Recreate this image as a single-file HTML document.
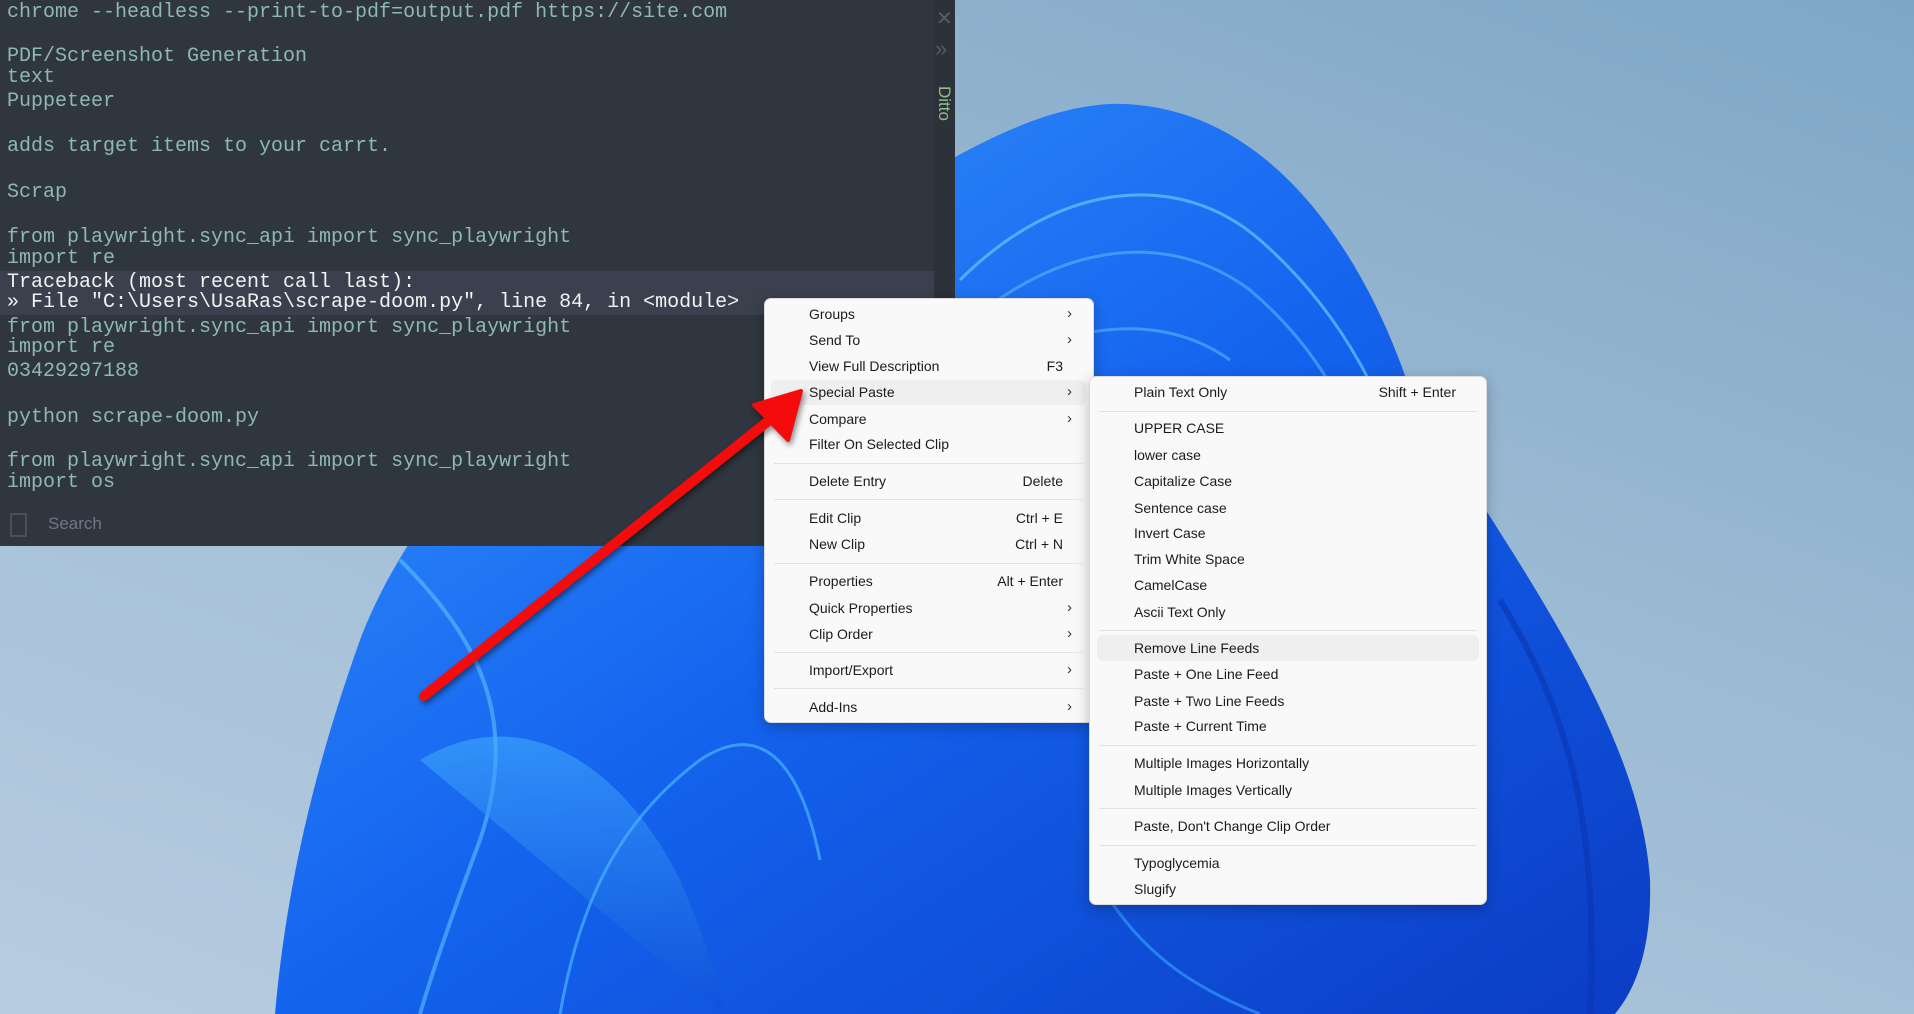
<!DOCTYPE html>
<html><head><meta charset="utf-8"><style>
*{margin:0;padding:0;box-sizing:border-box}
body{width:1914px;height:1014px;overflow:hidden;position:relative;background:linear-gradient(200deg,#7ea6c6 0%,#9dbbd4 45%,#b7cce0 100%);font-family:"Liberation Sans",sans-serif}
#term{position:absolute;left:0;top:0;width:955px;height:546px;background:#30363f}
#strip{position:absolute;left:934px;top:0;width:21px;height:546px;background:#2c313a}
.l{position:absolute;left:7px;font-family:"Liberation Mono",monospace;font-size:20px;line-height:21px;color:#8db8b6;white-space:pre}
.w{color:#f2f2f2}
#hl{position:absolute;left:0;top:271px;width:934px;height:44px;background:#3a404d}
.menu{position:absolute;background:#f9f9f9;border:1px solid #dcdcdc;border-radius:7px;box-shadow:0 4px 14px rgba(0,0,0,.25)}
.it{position:absolute;font-size:14px;color:#1b1b1b;line-height:26px;height:26px;white-space:nowrap}
.sc{position:absolute;font-size:14px;color:#1b1b1b;line-height:26px;height:26px;text-align:right;white-space:nowrap}
.ar{position:absolute;font-size:15px;color:#333;line-height:26px;height:26px}
.sep{position:absolute;height:1px;background:#e3e3e3}
.hi{position:absolute;background:#efefef;border-radius:5px}
</style></head><body>
<svg style="position:absolute;left:0;top:0" width="1914" height="1014">
<defs>
<linearGradient id="g1" x1="0" y1="0" x2="1" y2="1"><stop offset="0" stop-color="#3a9cff"/><stop offset=".5" stop-color="#1463ee"/><stop offset="1" stop-color="#0b3cc4"/></linearGradient>
<linearGradient id="g2" x1="0" y1="0" x2="0" y2="1"><stop offset="0" stop-color="#46b0ff"/><stop offset="1" stop-color="#0d4fd8"/></linearGradient>
</defs>
<path d="M275 1014 C285 900 310 780 360 640 C420 480 600 300 800 240 C900 200 1000 110 1110 104 C1260 100 1360 240 1410 390 C1500 540 1640 720 1650 880 C1652 950 1635 990 1615 1014 Z" fill="url(#g1)"/>
<path d="M960 280 C1060 180 1180 170 1260 240 C1340 310 1390 400 1420 520" fill="none" stroke="#6cc4ff" stroke-width="3" opacity=".7"/>
<path d="M960 330 C1060 240 1170 230 1250 290 C1320 350 1360 420 1390 540" fill="none" stroke="#5ab6ff" stroke-width="3" opacity=".6"/>
<path d="M960 390 C1060 320 1160 310 1230 360" fill="none" stroke="#5ab6ff" stroke-width="3" opacity=".6"/>
<path d="M400 560 C480 640 520 720 480 840 C450 920 430 980 420 1014" fill="none" stroke="#5fc0ff" stroke-width="4" opacity=".6"/>
<path d="M420 760 C520 700 620 760 680 880 C710 950 720 990 725 1014" fill="url(#g2)" opacity=".55"/>
<path d="M560 1014 C580 900 620 820 700 760 C760 720 800 760 820 860" fill="none" stroke="#49b4ff" stroke-width="3" opacity=".7"/>
<path d="M1500 600 C1560 700 1600 800 1590 1014" fill="none" stroke="#0a35b0" stroke-width="6" opacity=".6"/>
<path d="M1110 900 C1150 960 1200 990 1260 1014" fill="none" stroke="#39a4ff" stroke-width="3" opacity=".6"/>
</svg>
<div id="term">
<div id="hl"></div>
<div id="strip"></div>
<div class="l" style="top:2px">chrome --headless --print-to-pdf=output.pdf https://site.com</div>
<div class="l" style="top:46px">PDF/Screenshot Generation</div>
<div class="l" style="top:67px">text</div>
<div class="l" style="top:91px">Puppeteer</div>
<div class="l" style="top:136px">adds target items to your carrt.</div>
<div class="l" style="top:182px">Scrap</div>
<div class="l" style="top:227px">from playwright.sync_api import sync_playwright</div>
<div class="l" style="top:248px">import re</div>
<div class="l w" style="top:272px">Traceback (most recent call last):</div>
<div class="l w" style="top:292px">» File "C:\Users\UsaRas\scrape-doom.py", line 84, in &lt;module&gt;</div>
<div class="l" style="top:317px">from playwright.sync_api import sync_playwright</div>
<div class="l" style="top:337px">import re</div>
<div class="l" style="top:361px">03429297188</div>
<div class="l" style="top:407px">python scrape-doom.py</div>
<div class="l" style="top:451px">from playwright.sync_api import sync_playwright</div>
<div class="l" style="top:472px">import os</div>
<div style="position:absolute;left:10px;top:513px;width:17px;height:24px;border:2px solid #4a505a"></div>
<div style="position:absolute;left:48px;top:514px;font-size:17px;color:#707783">Search</div>
<div style="position:absolute;left:936px;top:6px;font-size:20px;color:#555c66">✕</div>
<div style="position:absolute;left:935px;top:36px;font-size:22px;color:#555c66">»</div>
<div style="position:absolute;left:934px;top:86px;font-size:17px;color:#8fbf8a;writing-mode:vertical-rl">Ditto</div>
</div>

<div class="menu" style="left:764px;top:298px;width:330px;height:425px"></div>
<div class="hi" style="left:771px;top:380px;width:315px;height:25px"></div>
<div class="menu" style="left:1089px;top:376px;width:398px;height:529px"></div>
<div class="hi" style="left:1097px;top:635px;width:382px;height:26px"></div>

<div id="m1">
<div class="it" style="left:809px;top:301px">Groups</div><div class="ar" style="left:1067px;top:301px">›</div>
<div class="it" style="left:809px;top:327px">Send To</div><div class="ar" style="left:1067px;top:327px">›</div>
<div class="it" style="left:809px;top:353px">View Full Description</div><div class="sc" style="left:1000px;width:63px;top:353px">F3</div>
<div class="it" style="left:809px;top:379px">Special Paste</div><div class="ar" style="left:1067px;top:379px">›</div>
<div class="it" style="left:809px;top:406px">Compare</div><div class="ar" style="left:1067px;top:406px">›</div>
<div class="it" style="left:809px;top:431px">Filter On Selected Clip</div>
<div class="sep" style="left:774px;width:310px;top:463px"></div>
<div class="it" style="left:809px;top:468px">Delete Entry</div><div class="sc" style="left:950px;width:113px;top:468px">Delete</div>
<div class="sep" style="left:774px;width:310px;top:499px"></div>
<div class="it" style="left:809px;top:505px">Edit Clip</div><div class="sc" style="left:950px;width:113px;top:505px">Ctrl + E</div>
<div class="it" style="left:809px;top:531px">New Clip</div><div class="sc" style="left:950px;width:113px;top:531px">Ctrl + N</div>
<div class="sep" style="left:774px;width:310px;top:563px"></div>
<div class="it" style="left:809px;top:568px">Properties</div><div class="sc" style="left:950px;width:113px;top:568px">Alt + Enter</div>
<div class="it" style="left:809px;top:595px">Quick Properties</div><div class="ar" style="left:1067px;top:595px">›</div>
<div class="it" style="left:809px;top:621px">Clip Order</div><div class="ar" style="left:1067px;top:621px">›</div>
<div class="sep" style="left:774px;width:310px;top:652px"></div>
<div class="it" style="left:809px;top:657px">Import/Export</div><div class="ar" style="left:1067px;top:657px">›</div>
<div class="sep" style="left:774px;width:310px;top:688px"></div>
<div class="it" style="left:809px;top:694px">Add-Ins</div><div class="ar" style="left:1067px;top:694px">›</div>
</div>

<div id="m2">
<div class="it" style="left:1134px;top:379px">Plain Text Only</div><div class="sc" style="left:1300px;width:156px;top:379px">Shift + Enter</div>
<div class="sep" style="left:1099px;width:378px;top:411px"></div>
<div class="it" style="left:1134px;top:415px">UPPER CASE</div>
<div class="it" style="left:1134px;top:442px">lower case</div>
<div class="it" style="left:1134px;top:468px">Capitalize Case</div>
<div class="it" style="left:1134px;top:495px">Sentence case</div>
<div class="it" style="left:1134px;top:520px">Invert Case</div>
<div class="it" style="left:1134px;top:546px">Trim White Space</div>
<div class="it" style="left:1134px;top:572px">CamelCase</div>
<div class="it" style="left:1134px;top:599px">Ascii Text Only</div>
<div class="sep" style="left:1099px;width:378px;top:630px"></div>
<div class="it" style="left:1134px;top:635px">Remove Line Feeds</div>
<div class="it" style="left:1134px;top:661px">Paste + One Line Feed</div>
<div class="it" style="left:1134px;top:688px">Paste + Two Line Feeds</div>
<div class="it" style="left:1134px;top:713px">Paste + Current Time</div>
<div class="sep" style="left:1099px;width:378px;top:745px"></div>
<div class="it" style="left:1134px;top:750px">Multiple Images Horizontally</div>
<div class="it" style="left:1134px;top:777px">Multiple Images Vertically</div>
<div class="sep" style="left:1099px;width:378px;top:808px"></div>
<div class="it" style="left:1134px;top:813px">Paste, Don't Change Clip Order</div>
<div class="sep" style="left:1099px;width:378px;top:845px"></div>
<div class="it" style="left:1134px;top:850px">Typoglycemia</div>
<div class="it" style="left:1134px;top:876px">Slugify</div>
</div>

<svg style="position:absolute;left:0;top:0" width="1914" height="1014">
<g filter="drop-shadow(2px 3px 3px rgba(0,0,0,.45))">
<line x1="424" y1="696" x2="772" y2="418" stroke="#f50b0b" stroke-width="10" stroke-linecap="round"/>
<polygon points="801,391 754,405 788,440" fill="#f50b0b" stroke="#f50b0b" stroke-width="4" stroke-linejoin="round"/>
</g>
</svg>
</body></html>
